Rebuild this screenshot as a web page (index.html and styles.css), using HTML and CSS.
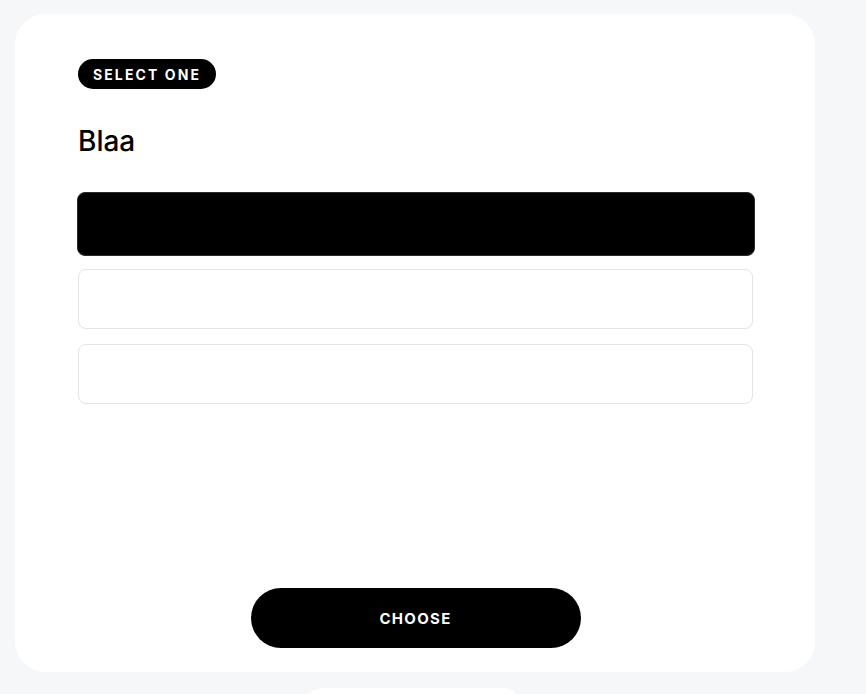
FILE: index.html
```html
<!DOCTYPE html>
<html lang="en">
<head>
<meta charset="utf-8">
<title>Select one</title>
<link rel="stylesheet" href="styles.css">
</head>
<body>
<main class="page">
  <section class="card">
    <span class="badge">SELECT ONE</span>
    <h1 class="title">Blaa</h1>
    <div class="options">
      <button class="option option--selected" type="button"></button>
      <button class="option" type="button"></button>
      <button class="option" type="button"></button>
    </div>
    <div class="actions">
      <button class="choose" type="button">CHOOSE</button>
    </div>
  </section>
  <div class="next-card"></div>
</main>
</body>
</html>
```

FILE: styles.css
```css
* { box-sizing: border-box; }

html, body {
  margin: 0;
  padding: 0;
  background: #f6f7f9;
  font-family: Inter, "Noto Sans", "Liberation Sans", sans-serif;
  color: #000;
}

.page {
  padding: 14px 15px 0;
  display: flex;
  flex-direction: column;
  align-items: flex-start;
  height: 694px;
  overflow: hidden;
}

.card {
  width: 800px;
  height: 658px;
  background: #fff;
  border-radius: 30px;
  padding: 45px 62px 24px 63px;
  display: flex;
  flex-direction: column;
  align-items: flex-start;
  flex-shrink: 0;
}

.badge {
  display: inline-flex;
  align-items: center;
  height: 30px;
  padding: 0 15px;
  border-radius: 15px;
  background: #000;
  color: #fff;
  font-size: 14px;
  font-weight: 700;
  letter-spacing: 2.1px;
}

.title {
  margin: 35px 0 0;
  font-size: 28px;
  line-height: 34px;
  font-weight: 500;
}

.options {
  margin-top: 34px;
  width: 675px;
  display: flex;
  flex-direction: column;
}

.option {
  display: block;
  width: 675px;
  height: 60px;
  border: 1px solid #e4e4e4;
  border-radius: 8px;
  background: #fff;
  padding: 0;
  margin: 0 0 15px;
  cursor: pointer;
}

.option--selected {
  width: 678px;
  height: 64px;
  margin: 0 0 13px -1px;
  background: #000;
  border-color: #2a2a2a;
}

.actions {
  margin-top: auto;
  align-self: stretch;
  display: flex;
  justify-content: center;
}

.choose {
  width: 330px;
  height: 60px;
  border: 0;
  border-radius: 30px;
  background: #000;
  color: #fff;
  font-family: inherit;
  font-size: 15px;
  font-weight: 700;
  letter-spacing: 1.3px;
  cursor: pointer;
}

.next-card {
  margin: 16px 0 0 288px;
  width: 220px;
  height: 60px;
  background: #fff;
  border-radius: 20px;
  flex-shrink: 0;
}
```
